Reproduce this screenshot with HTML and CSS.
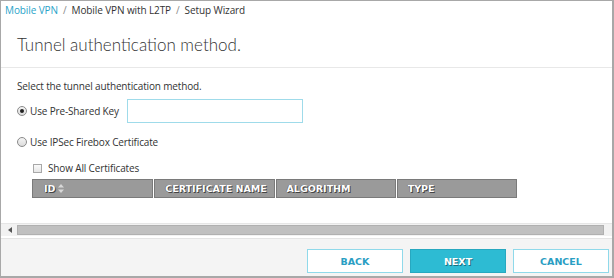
FILE: index.html
```html
<!DOCTYPE html>
<html>
<head>
<meta charset="utf-8">
<link rel="stylesheet" href="styles.css">
</head>
<body>
<div class="frame">
  <div class="crumbs"><span class="crumb-link">Mobile VPN</span><span class="sep">/</span><span class="crumb">Mobile VPN with L2TP</span><span class="sep">/</span><span class="crumb">Setup Wizard</span></div>
  <h1 class="title">Tunnel authentication method.</h1>
  <div class="content">
    <p class="intro">Select the tunnel authentication method.</p>
    <div class="row row-psk">
      <span class="radio checked"></span>
      <span class="label">Use Pre-Shared Key</span>
      <span class="input"></span>
    </div>
    <div class="row row-cert">
      <span class="radio"></span>
      <span class="label">Use IPSec Firebox Certificate</span>
    </div>
    <div class="row row-check">
      <span class="checkbox"></span>
      <span class="label">Show All Certificates</span>
    </div>
    <div class="thead">
      <div class="th th-id">ID<svg class="sort" width="6" height="9" viewBox="0 0 6 9"><path d="M0 3.5L3 0 6 3.5Z M0 5.5L3 9 6 5.5Z" fill="#d8d8d8"/></svg></div>
      <div class="th">CERTIFICATE NAME</div>
      <div class="th">ALGORITHM</div>
      <div class="th">TYPE</div>
    </div>
  </div>
  <div class="scrollbar">
    <div class="arrow"><svg width="4" height="6" viewBox="0 0 4 6"><path d="M4 0V6L0 3Z" fill="#555"/></svg></div>
    <div class="thumb"></div>
  </div>
  <div class="footer">
    <button class="btn btn-outline">BACK</button>
    <button class="btn btn-primary">NEXT</button>
    <button class="btn btn-outline">CANCEL</button>
  </div>
</div>
</body>
</html>
```

FILE: styles.css
```css
* { box-sizing: border-box; }
html, body { margin: 0; padding: 0; background: #fff; }
body {
  font-family: "Open Sans", "DejaVu Sans", sans-serif;
  color: #333;
}
.frame {
  width: 614px;
  height: 278px;
  border: 1px solid #a8a8a8;
  border-width: 1px 2px 2px 1px;
  display: flex;
  flex-direction: column;
  overflow: hidden;
}
.crumbs {
  height: 19px;
  padding-left: 4px;
  font-size: 10px;
  line-height: 19px;
  white-space: nowrap;
  letter-spacing: -0.1px;
}
.crumb-link { color: #2aa3c9; }
.crumb { color: #333; }
.sep { color: #888; margin: 0 5px; }
.title {
  margin: 0;
  height: 48px;
  padding: 13px 0 0 16px;
  font-family: "Lato", sans-serif;
  font-weight: 300;
  font-size: 17px;
  line-height: 24px;
  color: #333;
  border-bottom: 1px solid #e8e8e8;
}
.content {
  padding: 10px 0 0 16px;
  font-size: 10px;
  letter-spacing: -0.15px;
}
.intro {
  margin: 0;
  line-height: 16px;
}
.row {
  display: flex;
  align-items: center;
}
.row-psk { margin-top: 5px; height: 24px; }
.row-cert { margin-top: 11px; height: 16px; }
.row-check { margin-top: 10px; height: 16px; padding-left: 16px; }
.label { line-height: 16px; }
.radio {
  width: 10px;
  height: 10px;
  border-radius: 50%;
  border: 1px solid #8a8a8a;
  background: linear-gradient(#f4f4f4, #dcdcdc);
  margin-right: 3px;
  position: relative;
  flex: none;
}
.radio.checked::after {
  content: "";
  position: absolute;
  left: 2px;
  top: 2px;
  width: 4px;
  height: 4px;
  border-radius: 50%;
  background: #222;
}
.checkbox {
  width: 9px;
  height: 9px;
  border: 1px solid #a8a8a8;
  background: linear-gradient(#fafafa, #e6e6e6);
  margin-right: 6px;
  flex: none;
}
.input {
  width: 176px;
  height: 24px;
  border: 1px solid #9fdbea;
  margin-left: 8px;
  background: #fff;
}
.thead {
  margin: 3px 0 0 15px;
  width: 485px;
  height: 19px;
  display: flex;
  gap: 1px;
  background: #fff;
}
.th {
  flex: 1;
  background: #9a9a9a;
  border: 1px solid #7a7a7a;
  display: flex;
  align-items: center;
  padding-left: 10px;
  font-family: "DejaVu Sans", Verdana, sans-serif;
  font-weight: bold;
  font-size: 9.5px;
  color: #fff;
  text-shadow: 1px 1px 0 #444, -0.5px -0.5px 0 #555;
  letter-spacing: 0;
}
.th-id { padding-left: 11px; }
.sort { margin-left: 3px; }
.scrollbar {
  margin-top: 25px;
  height: 13px;
  padding: 1px 3px 1px 3px;
  background: #f2f2f2;
  border-top: 1px solid #e6e6e6;
  display: flex;
  gap: 1px;
}
.arrow {
  width: 12px;
  display: flex;
  align-items: center;
  justify-content: center;
  background: #f2f2f2;
}
.thumb {
  flex: 1;
  margin-right: 5px;
  background: #c0c0c0;
  border: 1px solid #b0b0b0;
}
.footer {
  flex: 1;
  margin-top: 2px;
  border-top: 1px solid #e4e4e4;
  background: #f4f4f4;
  display: flex;
  justify-content: flex-end;
  align-items: flex-start;
  gap: 7px;
  padding: 10px 3px 0 0;
}
.btn {
  width: 96px;
  height: 24px;
  font-family: "DejaVu Sans", Verdana, sans-serif;
  font-weight: bold;
  font-size: 9.5px;
  border: 1px solid #8fd9ea;
  padding: 0;
  cursor: pointer;
}
.btn-outline {
  background: #fff;
  color: #2a9ec3;
}
.btn-primary {
  background: #2dbbd3;
  border-color: #27a8c0;
  color: #fff;
  text-shadow: 1px 1px 0 #1a6f80;
}
```
